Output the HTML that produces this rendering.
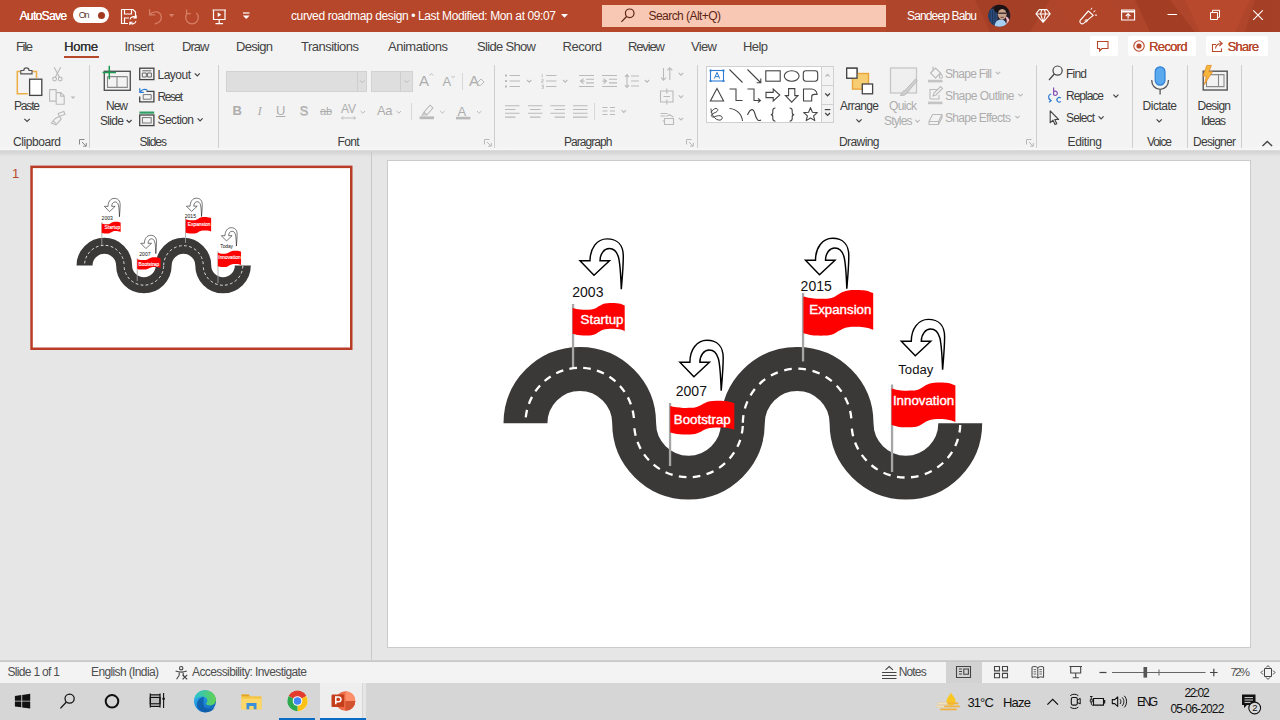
<!DOCTYPE html>
<html><head><meta charset="utf-8"><title>curved roadmap design - PowerPoint</title>
<style>
html,body{margin:0;padding:0;}
body{width:1280px;height:720px;overflow:hidden;position:relative;background:#e6e6e6;font-family:"Liberation Sans",sans-serif;}
.t{position:absolute;white-space:nowrap;line-height:1;}
.b{position:absolute;}
svg{position:absolute;left:0;top:0;overflow:visible;}
</style></head><body>

<div class="b" style="left:0;top:0;width:1280px;height:32px;background:#b7472a"></div>
<svg width="1280" height="32" viewBox="0 0 1280 32"><!-- title bar subtle pattern -->
<rect x="886" y="0" width="394" height="32" fill="#a9432a" opacity=".55"/>
<g opacity="0.6">
<path d="M975,0 L1050,0 L1030,32 L990,32 Z" fill="#9e3d24"/>
<path d="M1135,0 L1170,0 L1195,32 L1150,32 Z" fill="#9c3b23"/>
<path d="M1185,0 L1250,0 L1235,32 L1200,32 Z" fill="#c04d2e"/>
<path d="M1255,0 L1280,0 L1280,32 L1245,32 Z" fill="#a03d24"/>
<path d="M1060,0 L1110,0 L1125,32 L1075,32 Z" fill="#b14529"/>
</g>
</svg>
<div class="b" style="left:0;top:32px;width:1280px;height:118px;background:#f3f3f3"></div>
<div class="b" style="left:0;top:145px;width:1280px;height:5px;background:linear-gradient(#f3f3f3,#f7f7f7)"></div>
<div class="b" style="left:0;top:149.5px;width:1280px;height:7px;background:linear-gradient(#dedede 0%,#d3d3d3 25%,#dcdcdc 55%,#e6e6e6 100%)"></div>
<div class="b" style="left:371px;top:152px;width:1px;height:508px;background:#c9c9c9"></div>
<div class="b" style="left:0;top:660px;width:1280px;height:2px;background:linear-gradient(#d2d2d2,#c4c4c4)"></div>
<div class="b" style="left:31px;top:166px;width:321px;height:184px;background:#fff"></div>
<svg width="1280" height="720" viewBox="0 0 1280 720"><rect x="31.55" y="166.85" width="319.7" height="181.9" fill="#fff" stroke="#b83c26" stroke-width="2.5"/></svg>
<div class="b" style="left:388px;top:161px;width:862px;height:486px;background:#fff;box-shadow:0 0 0 1px #cbcbcb"></div>
<div class="b" style="left:0;top:662px;width:1280px;height:21px;background:#f3f3f3"></div>
<div class="b" style="left:946px;top:662px;width:36px;height:21px;background:#d2d2d2"></div>
<div class="b" style="left:0;top:683px;width:1280px;height:37px;background:#d6d6d6"></div>
<div class="b" style="left:320px;top:683px;width:41.5px;height:37px;background:#eeeeee"></div>
<div class="b" style="left:363px;top:683px;width:3px;height:37px;background:#e6e6e6"></div>
<div class="b" style="left:320px;top:718px;width:46px;height:2px;background:#0a6cc4"></div>
<div class="b" style="left:278.500px;top:718px;width:36.500px;height:2px;background:#0a6cc4"></div>
<div class="b" style="left:601.5px;top:4.5px;width:284.5px;height:22.5px;background:#f9c8b4"></div>
<div class="b" style="left:73px;top:7px;width:36px;height:16px;border-radius:8px;background:#fff"></div>
<div class="b" style="left:97.5px;top:11.5px;width:7px;height:7px;border-radius:3.5px;background:#a3391f"></div>
<span class="t" style="left:19.50px;top:9.84px;font-size:12px;color:#fff;letter-spacing:-0.648px;text-shadow:0.25px 0 0 #fff;">AutoSave</span>
<span class="t" style="left:78.80px;top:10.98px;font-size:9px;color:#5a3a30;letter-spacing:-1.406px;">On</span>
<span class="t" style="left:291.00px;top:9.84px;font-size:12px;color:#fff;letter-spacing:-0.387px;">curved roadmap design • Last Modified: Mon at 09:07</span>
<span class="t" style="left:648.50px;top:9.84px;font-size:12px;color:#5c2415;letter-spacing:-0.553px;">Search (Alt+Q)</span>
<span class="t" style="left:907.00px;top:9.84px;font-size:12px;color:#fff;letter-spacing:-0.855px;">Sandeep Babu</span>
<span class="t" style="left:16.00px;top:40.00px;font-size:13px;color:#444;letter-spacing:-1.316px;">File</span>
<span class="t" style="left:124.50px;top:40.00px;font-size:13px;color:#444;letter-spacing:-0.603px;">Insert</span>
<span class="t" style="left:182.00px;top:40.00px;font-size:13px;color:#444;letter-spacing:-0.945px;">Draw</span>
<span class="t" style="left:236.00px;top:40.00px;font-size:13px;color:#444;letter-spacing:-0.693px;">Design</span>
<span class="t" style="left:301.00px;top:40.00px;font-size:13px;color:#444;letter-spacing:-0.510px;">Transitions</span>
<span class="t" style="left:388.00px;top:40.00px;font-size:13px;color:#444;letter-spacing:-0.479px;">Animations</span>
<span class="t" style="left:477.00px;top:40.00px;font-size:13px;color:#444;letter-spacing:-0.671px;">Slide Show</span>
<span class="t" style="left:562.50px;top:40.00px;font-size:13px;color:#444;letter-spacing:-0.482px;">Record</span>
<span class="t" style="left:628.00px;top:40.00px;font-size:13px;color:#444;letter-spacing:-1.125px;">Review</span>
<span class="t" style="left:691.00px;top:40.00px;font-size:13px;color:#444;letter-spacing:-0.648px;">View</span>
<span class="t" style="left:743.00px;top:40.00px;font-size:13px;color:#444;letter-spacing:-0.579px;">Help</span>
<span class="t" style="left:64.00px;top:40.00px;font-size:13px;color:#333;letter-spacing:-0.226px;text-shadow:0.2px 0 0 #333;">Home</span>
<div class="b" style="left:64px;top:55.5px;width:35px;height:2.5px;background:#b7472a"></div>
<div class="b" style="left:1089.5px;top:36px;width:28.5px;height:20px;background:#fff;border-radius:2px"></div>
<div class="b" style="left:1127.5px;top:36px;width:68.5px;height:20px;background:#fff;border-radius:2px"></div>
<div class="b" style="left:1206px;top:36px;width:61.5px;height:20px;background:#fff;border-radius:2px"></div>
<span class="t" style="left:1149.00px;top:40.00px;font-size:13px;color:#b7472a;letter-spacing:-0.682px;text-shadow:0.15px 0 0 #b7472a;">Record</span>
<span class="t" style="left:1227.50px;top:40.00px;font-size:13px;color:#b7472a;letter-spacing:-0.798px;text-shadow:0.15px 0 0 #b7472a;">Share</span>
<span class="t" style="left:14.00px;top:99.84px;font-size:12px;color:#3c3c3c;letter-spacing:-1.171px;">Paste</span>
<span class="t" style="left:13.00px;top:136.44px;font-size:12px;color:#3c3c3c;letter-spacing:-0.420px;">Clipboard</span>
<span class="t" style="left:106.00px;top:99.84px;font-size:12px;color:#3c3c3c;letter-spacing:-1.003px;">New</span>
<span class="t" style="left:100.00px;top:114.84px;font-size:12px;color:#3c3c3c;letter-spacing:-0.671px;">Slide</span>
<span class="t" style="left:157.50px;top:69.14px;font-size:12px;color:#3c3c3c;letter-spacing:-0.506px;">Layout</span>
<span class="t" style="left:157.50px;top:91.14px;font-size:12px;color:#3c3c3c;letter-spacing:-1.462px;">Reset</span>
<span class="t" style="left:157.50px;top:114.14px;font-size:12px;color:#3c3c3c;letter-spacing:-0.588px;">Section</span>
<span class="t" style="left:139.50px;top:136.44px;font-size:12px;color:#3c3c3c;letter-spacing:-1.037px;">Slides</span>
<span class="t" style="left:337.50px;top:136.44px;font-size:12px;color:#3c3c3c;letter-spacing:-0.671px;">Font</span>
<span class="t" style="left:564.00px;top:136.44px;font-size:12px;color:#3c3c3c;letter-spacing:-0.942px;">Paragraph</span>
<span class="t" style="left:840.00px;top:99.84px;font-size:12px;color:#3c3c3c;letter-spacing:-0.615px;">Arrange</span>
<span class="t" style="left:889.00px;top:99.84px;font-size:12px;color:#adadad;letter-spacing:-0.668px;">Quick</span>
<span class="t" style="left:884.00px;top:114.84px;font-size:12px;color:#adadad;letter-spacing:-0.836px;">Styles</span>
<span class="t" style="left:945.00px;top:68.14px;font-size:12px;color:#adadad;letter-spacing:-0.707px;">Shape Fill</span>
<span class="t" style="left:945.00px;top:90.14px;font-size:12px;color:#adadad;letter-spacing:-0.546px;">Shape Outline</span>
<span class="t" style="left:945.00px;top:111.64px;font-size:12px;color:#adadad;letter-spacing:-0.708px;">Shape Effects</span>
<span class="t" style="left:839.00px;top:136.44px;font-size:12px;color:#3c3c3c;letter-spacing:-0.586px;">Drawing</span>
<span class="t" style="left:1066.00px;top:68.14px;font-size:12px;color:#3c3c3c;letter-spacing:-0.781px;">Find</span>
<span class="t" style="left:1066.00px;top:90.14px;font-size:12px;color:#3c3c3c;letter-spacing:-1.005px;">Replace</span>
<span class="t" style="left:1066.00px;top:111.64px;font-size:12px;color:#3c3c3c;letter-spacing:-0.870px;">Select</span>
<span class="t" style="left:1067.50px;top:136.44px;font-size:12px;color:#3c3c3c;letter-spacing:-0.365px;">Editing</span>
<span class="t" style="left:1142.50px;top:99.84px;font-size:12px;color:#3c3c3c;letter-spacing:-0.475px;">Dictate</span>
<span class="t" style="left:1147.00px;top:136.44px;font-size:12px;color:#3c3c3c;letter-spacing:-1.089px;">Voice</span>
<span class="t" style="left:1197.50px;top:99.84px;font-size:12px;color:#3c3c3c;letter-spacing:-0.771px;">Design</span>
<span class="t" style="left:1201.00px;top:114.84px;font-size:12px;color:#3c3c3c;letter-spacing:-1.089px;">Ideas</span>
<span class="t" style="left:1193.00px;top:136.44px;font-size:12px;color:#3c3c3c;letter-spacing:-0.718px;">Designer</span>
<span class="t" style="left:232.50px;top:104.00px;font-size:13px;color:#adadad;font-weight:bold;">B</span>
<span class="t" style="left:257.50px;top:104.00px;font-size:13px;color:#adadad;font-style:italic;font-family:'Liberation Serif',serif;">I</span>
<span class="t" style="left:276.00px;top:104.00px;font-size:13px;color:#adadad;text-decoration:underline;">U</span>
<span class="t" style="left:299.50px;top:104.00px;font-size:13px;color:#adadad;text-shadow:0.5px 0.5px 0 #c8c8c8;">S</span>
<span class="t" style="left:320.00px;top:105.69px;font-size:11px;color:#adadad;letter-spacing:-0.235px;text-decoration:line-through;">ab</span>
<span class="t" style="left:341.00px;top:102.84px;font-size:12px;color:#adadad;letter-spacing:-0.117px;">AV</span>
<span class="t" style="left:377.00px;top:104.00px;font-size:13px;color:#adadad;letter-spacing:-0.401px;">Aa</span>
<span class="t" style="left:419.00px;top:73.30px;font-size:15px;color:#adadad;">A</span>
<span class="t" style="left:442.50px;top:75.00px;font-size:13px;color:#adadad;">A</span>
<span class="t" style="left:469.00px;top:73.30px;font-size:15px;color:#adadad;">A</span>
<span class="t" style="left:457.50px;top:105.00px;font-size:13px;color:#adadad;">A</span>
<div class="b" style="left:226px;top:71px;width:141px;height:21px;background:#dedede;border:1px solid #d2d2d2;box-sizing:border-box"></div>
<div class="b" style="left:357px;top:72px;width:1px;height:19px;background:#cdcdcd"></div>
<div class="b" style="left:371px;top:71px;width:42px;height:21px;background:#dedede;border:1px solid #d2d2d2;box-sizing:border-box"></div>
<div class="b" style="left:400px;top:72px;width:1px;height:19px;background:#cdcdcd"></div>
<div class="b" style="left:706px;top:66px;width:128px;height:57px;background:#fff;border:1px solid #d0d0d0;box-sizing:border-box"></div>
<div class="b" style="left:821px;top:66px;width:13px;height:57px;background:#f3f3f3;border:1px solid #d0d0d0;box-sizing:border-box"></div>
<div class="b" style="left:821px;top:85px;width:13px;height:1px;background:#d0d0d0"></div>
<div class="b" style="left:821px;top:104px;width:13px;height:1px;background:#d0d0d0"></div>
<div class="b" style="left:89.0px;top:64.5px;height:83px;width:1px;background:#cecece"></div>
<div class="b" style="left:217.5px;top:64.5px;height:83px;width:1px;background:#cecece"></div>
<div class="b" style="left:493.5px;top:64.5px;height:83px;width:1px;background:#cecece"></div>
<div class="b" style="left:696.5px;top:64.5px;height:83px;width:1px;background:#cecece"></div>
<div class="b" style="left:1035.5px;top:64.5px;height:83px;width:1px;background:#cecece"></div>
<div class="b" style="left:1132.0px;top:64.5px;height:83px;width:1px;background:#cecece"></div>
<div class="b" style="left:1186.5px;top:64.5px;height:83px;width:1px;background:#cecece"></div>
<div class="b" style="left:1240.5px;top:64.5px;height:83px;width:1px;background:#cecece"></div>
<div class="b" style="left:461.5px;top:72.5px;height:17.5px;width:1px;background:#d8d8d8"></div>
<div class="b" style="left:410.5px;top:103px;height:17px;width:1px;background:#d8d8d8"></div>
<div class="b" style="left:594.0px;top:103px;height:17px;width:1px;background:#d8d8d8"></div>
<span class="t" style="left:12.00px;top:167.00px;font-size:13px;color:#b7472a;">1</span>
<span class="t" style="left:7.50px;top:665.84px;font-size:12px;color:#4f4f4f;letter-spacing:-0.686px;">Slide 1 of 1</span>
<span class="t" style="left:91.00px;top:665.84px;font-size:12px;color:#4f4f4f;letter-spacing:-0.622px;">English (India)</span>
<span class="t" style="left:192.00px;top:665.84px;font-size:12px;color:#4f4f4f;letter-spacing:-0.602px;">Accessibility: Investigate</span>
<span class="t" style="left:898.70px;top:666.34px;font-size:12px;color:#4f4f4f;letter-spacing:-0.837px;">Notes</span>
<span class="t" style="left:1230.40px;top:666.77px;font-size:11.5px;color:#555;letter-spacing:-1.708px;">72%</span>
<span class="t" style="left:967.40px;top:695.60px;font-size:13px;color:#111;letter-spacing:-0.882px;">31°C</span>
<span class="t" style="left:1003.00px;top:695.60px;font-size:13px;color:#111;letter-spacing:-0.783px;">Haze</span>
<span class="t" style="left:1137.00px;top:695.54px;font-size:12px;color:#111;letter-spacing:-2.502px;">ENG</span>
<span class="t" style="left:1184.40px;top:687.14px;font-size:12px;color:#111;letter-spacing:-1.207px;">22:02</span>
<span class="t" style="left:1170.40px;top:703.14px;font-size:12px;color:#111;letter-spacing:-0.820px;">05-06-2022</span>
<svg width="1280" height="720" viewBox="0 0 1280 720" fill="none" stroke-linecap="butt">
<g stroke="#fff" stroke-width="1.2">
<!-- save w/ sync -->
<path d="M121.5,9.5 h11.5 l2.5,2.5 v5 M121.5,9.5 v14 h6.5"/>
<path d="M124.5,9.5 v4.5 h7 v-4.5 M124.5,23.5 v-5.5 h4.5"/>
<path d="M130,19.5 a3.6,3.6 0 0 1 6,-1.8 M136.2,15.2 v2.8 h-2.8 M136,21 a3.6,3.6 0 0 1 -6,1.8 M129.8,25 v-2.8 h2.8" stroke-width="1.1"/>
<!-- present -->
<path d="M212.5,10 h13.5 M213.5,10 v9.5 h11.5 v-9.5 M219.2,19.5 v4 M215.5,23.7 h7.5"/>
<path d="M217.7,12.3 l3.6,2.4 l-3.6,2.4 z" fill="#fff" stroke="none"/>
<!-- customize -->
<path d="M243,13 h6.5"/>
<path d="M242.8,15.6 h6.9 l-3.45,3.4 z" fill="#fff" stroke="none"/>
<!-- title caret -->
<path d="M561,14 h7 l-3.5,3.8 z" fill="#fff" stroke="none"/>
<!-- diamond -->
<path d="M1039.3,9.6 h7.6 l3.3,4.3 l-7.1,8.4 l-7.1,-8.4 z M1036.2,13.9 h13.8 M1040.6,13.9 l2.5,8 l2.5,-8 M1040.6,13.9 l1.2,-4.2 M1045.6,13.9 l-1.2,-4.2" stroke-width="1.05" stroke-linejoin="round"/>
<!-- coming soon / megaphone -->
<path d="M1080.2,20.400 L1088.400,11 L1093.200,15.400 L1083.600,23.400 C1081.600,24.800 1078.800,22.400 1080.200,20.400 Z" stroke-width="1.150" stroke-linejoin="round"/>
<circle cx="1086.300" cy="20.700" r="1.100" stroke-width=".9"/>
<path d="M1090.800,9.800 l1.300,-2 M1093.400,12 l2,-1.300 M1094.800,15 l2.200,0.200" stroke-width="1"/>
<!-- ribbon display -->
<path d="M1121.600,10 h13 v10 h-13 z" stroke-width="1.100"/>
<path d="M1121.600,11.600 h13" stroke-width="1.800"/>
<path d="M1128.100,18.400 v-4.400 M1125.800,16 l2.300,-2.300 l2.300,2.300" stroke-width="1.100"/>
<!-- min / restore / close -->
<path d="M1167.5,14.5 h9.6" stroke-width="1"/>
<path d="M1210.5,12.5 h7 v7 h-7 z M1212.5,12.3 v-2 h7 v7 h-1.8" stroke-width="1"/>
<path d="M1253.2,10.3 l9.6,9.6 M1262.8,10.3 l-9.6,9.6" stroke-width="1.1"/>
</g>
<!-- faded undo/redo -->
<g stroke="#d47e65" stroke-width="1.300">
<path d="M149.600,9.200 v5.600 h5.600 M150,14.400 c3,-3.600 9.200,-3.600 11,1 c1.600,4 -1.400,7.600 -6.200,8.600"/>
<path d="M168.800,14 h5.600 l-2.800,3.200 z" fill="#d47e65" stroke="none"/>
<path d="M187.600,13 a6.300,6.300 0 1 0 8.800,0 M186.600,9.400 v4.200 h4.200"/>
</g>
<!-- search icon -->
<g stroke="#5c2415" stroke-width="1.2">
<circle cx="629.7" cy="13.3" r="4.3"/><path d="M626.6,16.5 l-5.2,5.4"/>
</g>
<!-- avatar -->
<defs><clipPath id="av"><circle cx="999.300" cy="15.800" r="11"/></clipPath></defs>
<g clip-path="url(#av)">
<rect x="988" y="4" width="23" height="24" fill="#2b2029"/>
<path d="M988,9 h9.500 v16 h-9.500 z" fill="#2c4a78"/>
<path d="M990,11 v13 M992.500,10 v14 M995,10 v14" stroke="#1f3558" stroke-width="1"/>
<ellipse cx="1001.500" cy="9" rx="7.500" ry="5" fill="#1a1214"/>
<ellipse cx="1002.200" cy="14.200" rx="4.300" ry="5.200" fill="#c9a48c"/>
<path d="M998.200,12.400 h8 v1.700 h-8 z" fill="#4a3430"/>
<path d="M1000.500,16.800 h3.400 v1.200 h-3.400 z" fill="#8a5a4c"/>
<path d="M994.500,28 c0,-6.500 3,-8.600 6.500,-8.600 c3.500,0 5.500,2.100 5.500,8.600z" fill="#a9cff0"/>
<path d="M1006.600,16.500 c3.600,2 4,7 1.400,10.500 l-2.600,-1.400 c1.800,-3 1.800,-5.600 0.200,-8z" fill="#f3b9c2"/>
</g>
<!-- tab row right buttons icons -->
<g stroke="#b7472a" stroke-width="1.1">
<path d="M1097.5,41.5 h10.5 v7 h-6 l-2.4,2.4 v-2.4 h-2.1 z"/>
<circle cx="1139" cy="46" r="5.2"/><circle cx="1139" cy="46" r="2.6" fill="#b7472a" stroke="none"/>
<path d="M1216,44.5 h-3.5 v7 h9 v-3 M1215.5,48.5 c0.5,-3.5 3,-5 6,-5 M1219.3,40.8 l2.9,2.7 l-2.9,2.7"/>
</g>
</svg>
<svg width="1280" height="720" viewBox="0 0 1280 720" fill="none">
<!-- ===== Clipboard group ===== -->
<!-- paste -->
<path d="M20.600,71.500 h-3.300 v22.300 h10.500 M32.400,71.500 h4.100 v6.500" stroke="#ecae45" stroke-width="1.500"/>
<path d="M20.800,73.800 v-3.300 h3 c0,-3.600 5.200,-3.600 5.200,0 h3 v3.300 z" stroke="#555" stroke-width="1.2" fill="#f3f3f3"/>
<rect x="29.6" y="79.2" width="12.2" height="16.2" fill="#fff" stroke="#444" stroke-width="1.3"/>
<path d="M24.4,118.8 l2.7,2.7 l2.7,-2.7" stroke="#444" stroke-width="1.2"/>
<!-- cut (disabled) -->
<g stroke="#bababa" stroke-width="1.1">
<path d="M54.2,67.3 l5.2,10 M60.6,67.3 l-5.2,10"/>
<circle cx="54.6" cy="79" r="1.9"/><circle cx="60.2" cy="79" r="1.9"/>
<!-- copy -->
<path d="M49.6,89.6 h6.5 v11.5 h-6.5 z M56.2,92.6 h4.6 l3.4,3.4 v8.2 h-8 z M60.6,92.8 v3.4 h3.4"/>
<path d="M70.6,96.4 h4.8 l-2.4,2.6 z" fill="#bababa" stroke="none"/>
<!-- format painter -->
<path d="M58.2,113.6 l5.6,-2.2 l1.2,2.8 l-5.6,2.4 z M59.4,116.4 l-4,2 l-4,4.6 l4.6,1.8 l5.2,-5.6 z M53,120.8 l3,2.6"/>
</g>
<!-- dialog launchers -->
<g stroke="#8a8a8a" stroke-width="1">
<path d="M79.5,144.5 v-5 h5 M82,142 l4,4 M86.3,143 v3.2 h-3.2"/>
<path d="M484.5,144.5 v-5 h5 M487,142 l4,4 M491.3,143 v3.2 h-3.2" stroke="#b8b8b8"/>
<path d="M686.5,144.5 v-5 h5 M689,142 l4,4 M693.3,143 v3.2 h-3.2" stroke="#b8b8b8"/>
<path d="M1026.5,144.5 v-5 h5 M1029,142 l4,4 M1033.3,143 v3.2 h-3.2" stroke="#b8b8b8"/>
</g>
<!-- ===== Slides group ===== -->
<rect x="104.3" y="71.3" width="26" height="19" stroke="#555" stroke-width="1.4"/>
<path d="M107.5,76.6 h19.8 M117,76.6 v10.8 M107.5,76.6 v10.8 h19.8 v-10.8" stroke="#8a8a8a" stroke-width="1.1"/>
<path d="M109.3,65.8 v13.4 M102.6,72.5 h13.4" stroke="#1f9a55" stroke-width="1.5"/>
<path d="M126.6,120 l2.5,2.5 l2.5,-2.5" stroke="#444" stroke-width="1.2"/>
<!-- layout -->
<rect x="139.7" y="68.2" width="14.2" height="11.4" stroke="#444" stroke-width="1.3"/>
<path d="M142.3,70.8 h9 M142.3,73 h4 v4 h-4 z M147.6,73 h3.8 v4 h-3.8 z" stroke="#666" stroke-width="1"/>
<path d="M194.8,73.4 l2.5,2.5 l2.5,-2.5" stroke="#444" stroke-width="1.2"/>
<!-- reset -->
<path d="M146.5,91.3 h7.4 v10.6 h-14.2 v-5.4" stroke="#444" stroke-width="1.3"/>
<path d="M143.2,94.6 h8 v4.6 h-8 z" stroke="#777" stroke-width="1"/>
<path d="M139.8,88.3 v4 h4 M140.2,92 c1.4,-2.6 5,-3.6 7.4,-1.6" stroke="#2b7cd3" stroke-width="1.2"/>
<!-- section -->
<path d="M139.4,112.6 h14.8" stroke="#2f9e63" stroke-width="2.2"/>
<rect x="139.7" y="115" width="14.2" height="10.6" stroke="#444" stroke-width="1.3"/>
<rect x="142.4" y="117.6" width="8.8" height="5.4" stroke="#777" stroke-width="1"/>
<path d="M197.6,118.4 l2.5,2.5 l2.5,-2.5" stroke="#444" stroke-width="1.2"/>

<!-- ===== Font group (disabled) ===== -->
<g stroke="#bababa" stroke-width="1" fill="none">
<path d="M360,80.4 l2.2,2.2 l2.2,-2.2 M404.5,80.4 l2.2,2.2 l2.2,-2.2"/>
<path d="M429.6,75.4 l1.8,-1.8 l1.8,1.8"/>
<path d="M451.4,76 l1.7,1.7 l1.7,-1.7"/>
<path d="M477.6,82.4 l3.4,-3.4 l3,3 l-3.4,3.4 h-3 z" />
<path d="M341.5,118 h14 M341.5,118 l1.8,-1.5 M341.5,118 l1.8,1.5 M355.5,118 l-1.8,-1.5 M355.5,118 l-1.8,1.5" stroke-width=".9"/>
<path d="M360.6,111 l2.2,2.2 l2.2,-2.2 M396.6,111 l2.2,2.2 l2.2,-2.2 M440.2,111 l2.2,2.2 l2.2,-2.2 M477,111 l2.2,2.2 l2.2,-2.2"/>
<!-- highlighter -->
<path d="M424,112.2 l6,-7 l3,2.6 l-6,7 z M424,112.2 l-1.8,3 l4.8,-0.4" stroke-width="1.1"/>
</g>
<rect x="419.6" y="116.4" width="14.4" height="2.8" fill="#b9b9b9"/>
<rect x="456" y="116.8" width="14.4" height="2.6" fill="#b9b9b9"/>

<!-- ===== Paragraph group (disabled) ===== -->
<g stroke="#bababa" stroke-width="1.1" fill="none">
<!-- bullets -->
<path d="M509.5,75.5 h10.5 M509.5,81 h10.5 M509.5,86.5 h10.5"/>
<path d="M505,74.6 h2 v2 h-2z M505,80 h2 v2 h-2z M505,85.5 h2 v2 h-2z" fill="#bababa" stroke="none"/>
<path d="M527,80 l2.2,2.2 l2.2,-2.2 M563,80 l2.2,2.2 l2.2,-2.2"/>
<!-- numbering -->
<path d="M546,75.5 h10.5 M546,81 h10.5 M546,86.5 h10.5"/>
<path d="M542.2,73.8 v3.6 M541.6,79.4 h1.6 v1.6 h-1.6 v1.6 h1.8 M541.6,85 h1.8 v3.4 h-1.8 M541.8,86.7 h1.4" stroke-width=".8"/>
<!-- dec indent -->
<path d="M579,75.5 h15 M586,79.2 h8 M586,82.9 h8 M579,86.5 h15 M583.5,78.6 l-3,2.5 l3,2.5 M580.5,81.1 h4" />
<!-- inc indent -->
<path d="M602,75.5 h15 M609,79.2 h8 M609,82.9 h8 M602,86.5 h15 M603.5,78.6 l3,2.5 l-3,2.5 M606.5,81.1 h-4"/>
<!-- line spacing -->
<path d="M631,76 h8 M631,81 h8 M631,86 h8 M627,74.6 v12.8 M625,76.8 l2,-2.2 l2,2.2 M625,85.2 l2,2.2 l2,-2.2"/>
<path d="M644.8,80 l2.2,2.2 l2.2,-2.2"/>
<!-- align -->
<path d="M505,105.7 h14.5 M505,109.5 h10.5 M505,113.3 h14.5 M505,117.1 h10.5"/>
<path d="M528,105.7 h14.5 M530,109.5 h10.5 M528,113.3 h14.5 M530,117.1 h10.5"/>
<path d="M550.5,105.7 h14.5 M554.5,109.5 h10.5 M550.5,113.3 h14.5 M554.5,117.1 h10.5"/>
<path d="M573,105.7 h14.5 M573,109.5 h14.5 M573,113.3 h14.5 M573,117.1 h14.5"/>
<!-- columns -->
<path d="M602.5,107.5 h5 M602.5,111 h5 M602.5,114.5 h5 M610,107.5 h5 M610,111 h5 M610,114.5 h5"/>
<path d="M621.6,110.2 l2.2,2.2 l2.2,-2.2"/>
<!-- text direction -->
<path d="M663.5,68 v12 M661,77.6 l2.5,2.6 l2.5,-2.6 M669.8,80 v-12 M667.3,70.4 l2.5,-2.6 l2.5,2.6" />
<path d="M678.8,73 l2.2,2.2 l2.2,-2.2 M678.8,95.4 l2.2,2.2 l2.2,-2.2 M678.8,117.8 l2.2,2.2 l2.2,-2.2"/>
<!-- align text -->
<path d="M660.5,91 h12.5 v11 h-12.5 z M663.5,96.5 h6.5 M666.8,88.6 v5 M666.8,99.4 v5" />
<!-- smartart -->
<path d="M660.5,113.5 h7 M660.5,116 h5 M664.5,118.5 h9 v6 h-9 z M662.5,121 h2 M666.5,116.3 l3,-1.6 l4,2.4 "/>
</g>
</svg>
<svg width="1280" height="720" viewBox="0 0 1280 720" fill="none">
<!-- ===== Shapes gallery ===== -->
<g stroke="#444" stroke-width="1.1">
<!-- row 1 -->
<rect x="710.5" y="70.5" width="13" height="10.5" stroke="#2b7cd3"/>
<path d="M714.3,78.6 l2.7,-6.2 l2.7,6.2 M715.2,76.6 h3.6" stroke="#2b7cd3" stroke-width="1"/>
<path d="M709.6,69.6 h1.8 v1.8 h-1.8z M722.6,69.6 h1.8 v1.8 h-1.8z M709.6,80.1 h1.8 v1.8 h-1.8z M722.6,80.1 h1.8 v1.8 h-1.8z" fill="#2b7cd3" stroke="none"/>
<path d="M729.5,69.5 l13,13"/>
<path d="M747.5,69.5 l13,13 M760.8,78.6 v4.2 h-4.2"/>
<rect x="765.8" y="70.8" width="14.4" height="10.4"/>
<ellipse cx="791.7" cy="76" rx="7.4" ry="5.2"/>
<rect x="803.3" y="70.8" width="14.4" height="10.4" rx="2.6"/>
<!-- row 2 -->
<path d="M717,88.4 l6.6,12.6 h-13.2 z"/>
<path d="M729.5,89 h6.5 v11.5 h6.5"/>
<path d="M747.5,89 h6.5 v11.5 h6 M758,98.4 l2.4,2.1 l-2.4,2.1" />
<path d="M766,92.4 h7.2 v-3.4 l6.6,6 l-6.6,6 v-3.4 h-7.2 z"/>
<path d="M788.6,88.6 h6.2 v7 h3.2 l-6.3,6.6 l-6.3,-6.6 h3.2 z"/>
<path d="M803.5,101 v-12 h8 c3,0 5.6,2.4 5.6,5.4 h-2.8 c-1.6,0 -2.6,1.2 -2.6,2.6 v4 z" stroke-linejoin="round"/>
<!-- row 3 -->
<path d="M711,108.5 c0,6 4,12 9,11.6 c3,-0.4 3,-4 0,-4.4 c-4,-0.4 -7,2.6 -8.4,0.6 c-1.4,-2.4 3.4,-3.2 5.4,-4.8 c1.4,-1.2 0.8,-3 -1,-3 c-2,0 -3.6,1.6 -5,4" stroke-width="1"/>
<path d="M729.5,108.5 c7,0.5 12.5,5.5 13,12.5"/>
<path d="M747.5,115 c3,-7 6,-7 7.5,-1 c1.5,6 3.500,7.500 6,6"/>
<path d="M775.4,108 c-2.200,0 -2.600,1 -2.600,2.600 v1.800 c0,1.400 -0.600,2.200 -2,2.200 c1.400,0 2,0.800 2,2.200 v1.800 c0,1.600 0.400,2.600 2.600,2.600"/>
<path d="M789.6,108 c2.200,0 2.600,1 2.600,2.600 v1.800 c0,1.400 0.600,2.200 2,2.200 c-1.400,0 -2,0.800 -2,2.200 v1.800 c0,1.600 -0.400,2.600 -2.600,2.600"/>
<path d="M810.5,107.600 l1.900,4.600 l4.900,0.400 l-3.700,3.200 l1.200,4.800 l-4.300,-2.600 l-4.300,2.600 l1.200,-4.800 l-3.700,-3.200 l4.900,-0.400 z" stroke-linejoin="round"/>
<!-- gallery scroll -->
<path d="M825.4,76.600 l2.200,-2.200 l2.200,2.200" stroke="#bdbdbd"/>
<path d="M825.2,93.400 l2.400,2.400 l2.400,-2.400" stroke-width="1.3"/>
<path d="M824.800,109.600 h5.600" stroke-width="1.2"/><path d="M825.200,113 l2.400,2.400 l2.400,-2.400" stroke-width="1.3"/>
</g>
<!-- arrange -->
<rect x="846.7" y="68.200" width="10.300" height="10" fill="#fff" stroke="#444" stroke-width="1.3"/>
<rect x="852.500" y="73.500" width="16" height="15.600" fill="#f7cd74" stroke="#e9a63a" stroke-width="1.400"/>
<rect x="846.7" y="68.200" width="10.300" height="10" fill="#fff" stroke="#444" stroke-width="1.3"/>
<rect x="862.300" y="84" width="10.300" height="9.800" fill="#fff" stroke="#444" stroke-width="1.3"/>
<path d="M856.400,119.400 l2.600,2.600 l2.600,-2.600" stroke="#444" stroke-width="1.2"/>
<!-- quick styles (disabled) -->
<rect x="890.500" y="68" width="26" height="25" stroke="#c6c6c6" stroke-width="1.300" fill="#efefef"/>
<path d="M915.500,79 l1.800,1.600 l-9.600,11.600 l-2.400,-2 z M905,90.600 c-2,0.200 -3,1.400 -3.200,3.400 l-1.600,1.200 c3,0.600 5.800,0 6.800,-2.600" fill="#cfcfcf" stroke="#bababa" stroke-width="1"/>
<path d="M915.200,119.800 l2.300,2.300 l2.300,-2.300" stroke="#bababa" stroke-width="1.100"/>
<!-- shape fill/outline/effects (disabled) -->
<g stroke="#bababa" stroke-width="1.100">
<path d="M930.500,73 l5,-5 l5,5 l-5,5 z M933,66.500 v4 M940.800,73.400 c0.800,1.400 1.600,2.400 1.600,3.400 a1.500,1.500 0 0 1 -3,0 c0,-1 0.700,-2 1.400,-3.400z"/>
<rect x="928" y="79.800" width="14.500" height="2.600" fill="#c4c4c4" stroke="none"/>
<path d="M930,99 v-9.500 h8.500 M930,99 h9 v-4 M933,96 l1,-3 l6.500,-6.500 l2,2 l-6.500,6.500 z"/>
<rect x="928" y="101.600" width="14.500" height="2.600" fill="#c4c4c4" stroke="none"/>
<path d="M929,121.500 l3.500,-7 h9.500 l-3.500,7 z M929,121.500 v3 h9.500 v-3 M938.500,124.500 l3.500,-7 v-3" stroke-linejoin="round"/>
<path d="M995.800,71.800 l2.200,2.200 l2.200,-2.200 M1018.300,93.800 l2.200,2.200 l2.200,-2.200 M1015.300,115.800 l2.200,2.200 l2.200,-2.200"/>
</g>
<!-- ===== Editing ===== -->
<g stroke="#444" stroke-width="1.200">
<circle cx="1057.600" cy="70.600" r="4.600"/><path d="M1054.300,74 l-5.300,6"/>
<path d="M1050.200,110.800 v12 l2.800,-2.600 l2,4.400 l1.800,-0.800 l-2,-4.300 h3.800 z" stroke-linejoin="round" stroke-width="1.100"/>
<path d="M1113.400,94.600 l2.500,2.500 l2.500,-2.500 M1098.600,116.400 l2.500,2.500 l2.500,-2.500"/>
</g>
<!-- replace -->
<g stroke-width="1.200">
<path d="M1053.600,87.600 v7.400 M1053.600,92 a2.100,2.100 0 1 1 0,2.600" stroke="#8653b5"/>
<path d="M1060.800,98 a2.300,2.300 0 1 0 0,3.400" stroke="#2b7cd3"/>
<path d="M1051.200,94 c-3.400,0.600 -3.400,5.600 0,6.400 M1049.200,98.600 l2,2 l-2.200,1.600" stroke="#2b7cd3" stroke-width="1.100"/>
</g>
<!-- ===== Dictate ===== -->
<rect x="1155.200" y="66.800" width="9.800" height="18.400" rx="4.900" fill="#5aa9ee" stroke="#2f80d3" stroke-width="1.200"/>
<path d="M1151.700,80 c0,5.600 3.600,9.400 8.400,9.400 c4.800,0 8.400,-3.800 8.400,-9.400 M1160.100,89.400 v5.200" stroke="#555" stroke-width="1.300"/>
<path d="M1156.600,119.400 l2.600,2.600 l2.600,-2.600" stroke="#444" stroke-width="1.200"/>
<!-- ===== Designer ===== -->
<rect x="1203.200" y="71.200" width="24" height="18.800" stroke="#555" stroke-width="1.400"/>
<path d="M1206.500,74.600 h17.500 v12 h-17.500 z M1218.500,74.600 v12" stroke="#8a8a8a" stroke-width="1.100"/>
<path d="M1206.800,65.400 h4.600 l-2.600,6.400 h3.600 l-8,12.800 l2,-8.600 h-3.200 z" fill="#f5b73c" stroke="#e8912c" stroke-width=".9" stroke-linejoin="round"/>
<!-- collapse chevron -->
<path d="M1262.500,146 l4.800,-4.600 l4.800,4.600" stroke="#444" stroke-width="1.400"/>
</svg>
<svg width="1280" height="720" viewBox="0 0 1280 720" fill="none">
<!-- ===== status bar ===== -->
<g stroke="#444" stroke-width="1.1">
<!-- accessibility -->
<circle cx="181.200" cy="668.200" r="1.700"/>
<path d="M175.600,671 c3.600,1.400 7.600,1.400 11.200,0 M179.200,672 v3.200 l-2.600,4 M183.200,672 v3.200 l0.800,1.200"/>
<path d="M182.600,674.800 l4.600,4.600 M187.200,674.800 l-4.600,4.600" stroke-width="1.200"/>
<!-- notes -->
<path d="M882,675.500 h14.500 M882,678.500 h14.500 M882,672.500 h14.500 M885.500,669.800 l3.700,-3.200 l3.700,3.200" stroke-width="1.100"/>
<!-- normal view -->
<path d="M956.500,666.500 h14 v11 h-14 z M959,669 h3 M959,671.500 h3 M959,674 h3 M963.800,669 h4.600 v5.200 h-4.600 z" stroke-width="1.100"/>
<!-- sorter -->
<path d="M994.500,666.500 h5 v4.400 h-5 z M1002.500,666.500 h5 v4.400 h-5 z M994.500,673.400 h5 v4.400 h-5 z M1002.500,673.400 h5 v4.400 h-5 z"/>
<!-- reading -->
<path d="M1032,667 c2.400,-0.800 4,-0.600 5.800,0.600 c1.800,-1.200 3.400,-1.400 5.800,-0.600 v10.400 c-2.400,-0.800 -4,-0.600 -5.800,0.600 c-1.800,-1.200 -3.400,-1.400 -5.800,-0.600 z M1037.800,667.600 v10.400" stroke-width="1"/>
<path d="M1033.600,669.600 h2.600 M1033.600,671.800 h2.600 M1033.600,674 h2.600 M1039.400,669.600 h2.600 M1039.400,671.800 h2.600 M1039.400,674 h2.600" stroke-width=".8"/>
<!-- slideshow -->
<path d="M1069.500,666.500 h12.500 M1070.700,666.500 v6.500 h10 v-6.500 M1075.700,673 v4.600 M1072.700,677.800 h6"/>
<!-- zoom -->
<path d="M1099.500,672.500 h7" stroke-width="1.200"/>
<path d="M1112,672.500 h93.500" stroke="#666" stroke-width="1"/>
<path d="M1159,669.500 v6" stroke="#666" stroke-width="1"/>
<rect x="1143.500" y="667" width="3.600" height="10.600" fill="#555" stroke="none"/>
<path d="M1210,672.500 h7.600 M1213.800,668.700 v7.600" stroke-width="1.200"/>
<!-- fit -->
<path d="M1264.500,668.500 h7 v8 h-7 z M1268,665.600 l-2,2 M1268,665.600 l2,2 M1268,679.400 l-2,-2 M1268,679.400 l2,-2 M1261,672.500 l2,-2 M1261,672.500 l2,2 M1275,672.500 l-2,-2 M1275,672.500 l-2,2" stroke-width="1"/>
</g>
<!-- ===== taskbar ===== -->
<!-- windows -->
<path d="M14.900,695.900 l6.400,-0.900 v5.700 h-6.400 z M22.200,694.900 l8,-1.200 v7 h-8 z M14.900,701.600 h6.400 v5.700 l-6.400,-0.900 z M22.200,701.600 h8 v7 l-8,-1.200 z" fill="#111"/>
<!-- search -->
<circle cx="69.600" cy="698.600" r="4.600" stroke="#111" stroke-width="1.250"/><path d="M66.400,702 l-6,6.400" stroke="#111" stroke-width="1.300"/>
<!-- cortana -->
<circle cx="112" cy="701.300" r="6.300" stroke="#111" stroke-width="2"/>
<!-- task view -->
<g stroke="#111" stroke-width="1.200">
<rect x="150.300" y="697.400" width="9.700" height="6.400" fill="#bdbdbd"/>
<path d="M150.300,693.600 v13.800 M160,693.600 v13.800 M150.300,694.800 h9.700 M150.300,706.400 h9.700"/>
<path d="M163.600,693 v15" stroke-width="1.100"/>
<circle cx="163.600" cy="698.800" r="1.300" fill="#111" stroke="none"/>
</g>
<!-- edge -->
<defs>
<linearGradient id="eg1" x1="0" y1="0" x2="1" y2="1"><stop offset="0" stop-color="#35c1f1"/><stop offset=".6" stop-color="#1b7fd4"/><stop offset="1" stop-color="#0c59a4"/></linearGradient>
<linearGradient id="eg2" x1="0" y1="0" x2="1" y2="0"><stop offset="0" stop-color="#2bc3d2"/><stop offset="1" stop-color="#63d24e"/></linearGradient>
</defs>
<circle cx="205" cy="701.300" r="11" fill="url(#eg1)"/>
<path d="M194.300,699 c1,-6 6,-8.800 10.800,-8.800 c6.200,0 10.800,4.400 10.800,9.600 c0,3.600 -2.800,5.600 -5.800,5.600 c-2.600,0 -4,-1 -4,-2 c0,-0.800 1.200,-1.200 1.200,-3 c0,-2.200 -2.200,-4 -5,-4 c-3.600,0 -6.600,1.600 -8,2.600z" fill="url(#eg2)"/>
<path d="M203.600,704.200 c0,2.400 2.400,5 6.600,5 c2,0 3.600,-0.600 4.600,-1.400 c-2,3 -5.600,4.600 -9.200,4.600 c-5,0 -8.600,-3.800 -8.600,-8 c0,-4 3,-7 7,-7.400 c-0.600,1.600 -0.400,4.600 -0.400,7.200z" fill="#0d5ba8" opacity=".85"/>
<!-- explorer -->
<path d="M241.500,694.500 h7 l1.600,1.800 h11.400 v13 h-20 z" fill="#f6c445"/>
<path d="M241.500,698.500 h20 v10.800 h-20 z" fill="#fbd869"/>
<path d="M246.500,703 h10 v6.300 h-2.800 v-3.400 h-4.400 v3.400 h-2.800 z" fill="#3a8fdb"/>
<path d="M241.500,694.500 h7 l1.600,1.800 h-8.600 z" fill="#e0a526"/>
<!-- chrome -->
<circle cx="297.500" cy="701" r="10.200" fill="#fff"/>
<path d="M297.500,701 L288.700,695.900 A10.200,10.200 0 0 1 306.300,695.900 Z" fill="#e33b2e"/>
<path d="M297.500,701 L306.300,695.900 A10.200,10.200 0 0 1 297.500,711.200 Z" fill="#fbc116"/>
<path d="M297.500,701 L297.500,711.200 A10.200,10.200 0 0 1 288.700,695.900 Z" fill="#2da94f"/>
<path d="M288.700,695.900 A10.200,10.200 0 0 1 306.300,695.900 L297.500,695.900 Z" fill="#e33b2e"/>
<circle cx="297.500" cy="701" r="4.800" fill="#fff"/>
<circle cx="297.500" cy="701" r="3.800" fill="#4285f4"/>
<!-- powerpoint -->
<circle cx="345.500" cy="701" r="9.800" fill="#ed6c47"/>
<path d="M345.500,691.200 a9.800,9.800 0 0 1 9.800,9.800 h-9.800 z" fill="#ff8f6b"/>
<path d="M345.500,701 h9.800 a9.800,9.800 0 0 1 -9.800,9.800 z" fill="#d35230"/>
<rect x="331.500" y="694.500" width="12.600" height="12.600" rx="1.200" fill="#c43e1c"/>
<path d="M335.800,704.300 v-7.200 h2.600 c3.400,0 3.400,4.600 0,4.600 h-2.600" stroke="#fff" stroke-width="1.500"/>
<!-- weather -->
<path d="M951,692.400 c1.400,3 4.600,5.600 4.600,8.600 a4.600,4.600 0 0 1 -9.200,0 c0,-3 3.200,-5.600 4.600,-8.600z" fill="#f9c623"/>
<path d="M938.500,703.400 h19 M937.500,706.400 h21.500 M941,709.400 h15" stroke="#f2b13a" stroke-width="1.800" stroke-linecap="round"/>
<path d="M938.500,703.400 h8 M937.500,706.400 h6" stroke="#ece3c4" stroke-width="1.800" stroke-linecap="round"/>
<!-- tray -->
<g stroke="#111" stroke-width="1.300">
<path d="M1047.400,704.600 l5.300,-5.300 l5.300,5.300"/>
<rect x="1071.300" y="697.500" width="6" height="7.600" rx="1.600" stroke-width="1.100"/>
<path d="M1077.400,700 l2.800,-1.600 v5.600 l-2.800,-1.600 M1070.300,695.600 c2.400,-1.800 5.600,-1.800 8,0 M1070.300,707.200 c2.400,1.800 5.600,1.800 8,0" stroke-width="1"/>
<path d="M1093.500,698.500 h10 v6.600 h-10 z M1103.500,700.600 h1.200 v2.400 h-1.200" stroke-width="1.100"/>
<path d="M1090,696.500 h2.600 M1091.300,696.500 v2.600 M1090.300,699.300 h2 v2.600 h-2 z M1091.300,702 v2 c0,1 1,1.200 2,1.200" stroke-width=".9"/>
<path d="M1112.300,699.600 h2.400 l3,-2.800 v9.600 l-3,-2.800 h-2.400 z" stroke-width="1.100" stroke-linejoin="round"/>
<path d="M1120,699.200 c1.200,1.400 1.200,3.400 0,4.800 M1122.200,697.400 c2.200,2.400 2.200,6 0,8.400 M1124.300,695.800 c3,3.200 3,8.400 0,11.600" stroke-width="1"/>
</g>
<!-- notifications -->
<path d="M1242,694.500 h13.500 v10.500 h-8.500 l-3,3 v-3 h-2 z" fill="#111"/>
<path d="M1244.500,697.600 h8.500 M1244.500,700 h8.500 M1244.500,702.400 h6" stroke="#d6d6d6" stroke-width="1"/>
<circle cx="1254.700" cy="708" r="5.900" fill="#d9d9d9" stroke="#111" stroke-width="1.100"/>
</svg>

<svg width="1280" height="720" viewBox="0 0 1280 720">
<defs><symbol id="sl" viewBox="388 161 862 486">
<path d="M525.45,423.3 A54.35,54.35 0 0 1 634.15,423.3 A54.35,54.35 0 0 0 742.85,423.3 A54.35,54.35 0 0 1 851.55,423.3 A54.35,54.35 0 0 0 960.25,423.3" fill="none" stroke="#3b3838" stroke-width="43.9"/>
<path d="M525.45,423.3 A54.35,55.5 0 0 1 634.15,423.3" fill="none" stroke="#fff" stroke-width="2.3" stroke-dasharray="7.6 6.34" stroke-dashoffset="7.97"/>
<path d="M634.15,423.3 A54.35,54.0 0 0 0 742.85,423.3" fill="none" stroke="#fff" stroke-width="2.3" stroke-dasharray="7.6 6.44" stroke-dashoffset="9.02"/>
<path d="M742.85,423.3 A54.35,54.6 0 0 1 851.55,423.3" fill="none" stroke="#fff" stroke-width="2.3" stroke-dasharray="7.6 6.73" stroke-dashoffset="13.67"/>
<path d="M851.55,423.3 A54.35,54.2 0 0 0 960.25,423.3" fill="none" stroke="#fff" stroke-width="2.3" stroke-dasharray="7.6 6.53" stroke-dashoffset="8.63"/>
<rect x="571.9" y="304" width="2.3" height="63" fill="#a6a6a6"/>
<rect x="668.9" y="403" width="2.3" height="63" fill="#a6a6a6"/>
<rect x="801.9" y="293" width="2.3" height="68.5" fill="#a6a6a6"/>
<rect x="890.9" y="384.5" width="2.3" height="87.5" fill="#a6a6a6"/>
<path d="M572.60,307.96 C573.47,308.18 576.07,308.95 577.81,309.26 C579.55,309.56 581.11,309.72 583.02,309.80 C584.93,309.88 587.54,309.85 589.27,309.73 C591.01,309.62 592.22,309.45 593.44,309.12 C594.66,308.79 595.61,308.27 596.57,307.76 C597.52,307.25 598.30,306.58 599.17,306.06 C600.04,305.54 600.82,305.05 601.78,304.63 C602.73,304.21 603.51,303.82 604.90,303.54 C606.29,303.27 608.03,303.05 610.11,303.00 C612.20,302.95 615.50,303.08 617.41,303.27 C619.32,303.46 620.36,303.79 621.57,304.16 C622.79,304.52 624.18,305.23 624.70,305.45 L624.70,331.15 C624.18,330.93 622.79,330.22 621.57,329.86 C620.36,329.49 619.32,329.16 617.41,328.97 C615.50,328.78 612.20,328.65 610.11,328.70 C608.03,328.75 606.29,328.97 604.90,329.24 C603.51,329.52 602.73,329.91 601.78,330.33 C600.82,330.75 600.04,331.24 599.17,331.76 C598.30,332.28 597.52,332.95 596.57,333.46 C595.61,333.97 594.66,334.49 593.44,334.82 C592.22,335.15 591.01,335.32 589.27,335.43 C587.54,335.55 584.93,335.58 583.02,335.50 C581.11,335.42 579.55,335.26 577.81,334.96 C576.07,334.65 573.47,333.88 572.60,333.66 Z" fill="#ff0000"/>
<path d="M670.20,405.98 C671.27,406.21 674.47,407.01 676.61,407.33 C678.75,407.65 680.67,407.82 683.02,407.90 C685.37,407.98 688.58,407.95 690.71,407.83 C692.85,407.71 694.34,407.53 695.84,407.19 C697.34,406.85 698.51,406.30 699.69,405.77 C700.86,405.24 701.82,404.54 702.89,404.00 C703.96,403.45 704.92,402.94 706.10,402.50 C707.27,402.07 708.23,401.65 709.94,401.37 C711.65,401.08 713.79,400.85 716.35,400.80 C718.92,400.75 722.98,400.88 725.33,401.08 C727.68,401.29 728.96,401.63 730.45,402.01 C731.95,402.39 733.66,403.13 734.30,403.36 L734.30,429.96 C733.66,429.73 731.95,428.99 730.45,428.61 C728.96,428.23 727.68,427.89 725.33,427.68 C722.98,427.48 718.92,427.35 716.35,427.40 C713.79,427.45 711.65,427.68 709.94,427.97 C708.23,428.25 707.27,428.67 706.10,429.10 C704.92,429.54 703.96,430.05 702.89,430.60 C701.82,431.14 700.86,431.84 699.69,432.37 C698.51,432.90 697.34,433.45 695.84,433.79 C694.34,434.13 692.85,434.31 690.71,434.43 C688.58,434.55 685.37,434.58 683.02,434.50 C680.67,434.42 678.75,434.25 676.61,433.93 C674.47,433.61 671.27,432.81 670.20,432.58 Z" fill="#ff0000"/>
<path d="M803.40,296.42 C804.56,296.70 808.05,297.70 810.38,298.10 C812.71,298.49 814.80,298.70 817.36,298.80 C819.92,298.90 823.41,298.86 825.74,298.71 C828.06,298.57 829.69,298.35 831.32,297.92 C832.95,297.49 834.23,296.82 835.51,296.16 C836.79,295.50 837.83,294.63 839.00,293.96 C840.16,293.29 841.21,292.65 842.49,292.11 C843.77,291.57 844.81,291.06 846.68,290.70 C848.54,290.35 850.86,290.06 853.66,290.00 C856.45,289.94 860.87,290.10 863.43,290.35 C865.99,290.60 867.38,291.03 869.01,291.50 C870.64,291.97 872.50,292.89 873.20,293.17 L873.20,329.97 C872.50,329.69 870.64,328.77 869.01,328.30 C867.38,327.83 865.99,327.40 863.43,327.15 C860.87,326.90 856.45,326.74 853.66,326.80 C850.86,326.86 848.54,327.15 846.68,327.50 C844.81,327.86 843.77,328.37 842.49,328.91 C841.21,329.45 840.16,330.09 839.00,330.76 C837.83,331.43 836.79,332.30 835.51,332.96 C834.23,333.62 832.95,334.29 831.32,334.72 C829.69,335.15 828.06,335.37 825.74,335.51 C823.41,335.66 819.92,335.70 817.36,335.60 C814.80,335.50 812.71,335.29 810.38,334.90 C808.05,334.50 804.56,333.50 803.40,333.22 Z" fill="#ff0000"/>
<path d="M891.60,388.49 C892.66,388.75 895.85,389.67 897.98,390.04 C900.11,390.41 902.02,390.60 904.36,390.70 C906.70,390.80 909.89,390.75 912.02,390.62 C914.14,390.48 915.63,390.28 917.12,389.88 C918.61,389.48 919.78,388.86 920.95,388.24 C922.12,387.62 923.07,386.82 924.14,386.19 C925.20,385.56 926.16,384.97 927.33,384.47 C928.50,383.96 929.45,383.48 931.16,383.16 C932.86,382.83 934.98,382.55 937.54,382.50 C940.09,382.45 944.13,382.60 946.47,382.83 C948.81,383.06 950.08,383.46 951.57,383.89 C953.06,384.33 954.76,385.19 955.40,385.45 L955.40,422.05 C954.76,421.79 953.06,420.93 951.57,420.49 C950.08,420.06 948.81,419.66 946.47,419.43 C944.13,419.20 940.09,419.05 937.54,419.10 C934.98,419.15 932.86,419.43 931.16,419.76 C929.45,420.08 928.50,420.56 927.33,421.07 C926.16,421.57 925.20,422.16 924.14,422.79 C923.07,423.42 922.12,424.23 920.95,424.84 C919.78,425.46 918.61,426.08 917.12,426.48 C915.63,426.88 914.14,427.08 912.02,427.22 C909.89,427.35 906.70,427.40 904.36,427.30 C902.02,427.20 900.11,427.01 897.98,426.64 C895.85,426.27 892.66,425.35 891.60,425.09 Z" fill="#ff0000"/>
<path d="M0,0 L-14,-14.5 L-4,-14.5 C-4,-27 3,-36.4 13,-36.4 C23.5,-36.4 29.3,-30 29.3,-19 C29.3,-8 28.2,3 27.3,14 C26.8,0 26.3,-11 24.5,-18 C22.6,-24.6 19.5,-26.7 15.3,-26.7 C10.2,-26.7 6,-21.5 6,-14.5 L15.5,-14.5 Z" transform="translate(594,275.3)" fill="#fff" stroke="#000" stroke-width="1.45" stroke-linejoin="miter"/>
<path d="M0,0 L-14,-14.5 L-4,-14.5 C-4,-27 3,-36.4 13,-36.4 C23.5,-36.4 29.3,-30 29.3,-19 C29.3,-8 28.2,3 27.3,14 C26.8,0 26.3,-11 24.5,-18 C22.6,-24.6 19.5,-26.7 15.3,-26.7 C10.2,-26.7 6,-21.5 6,-14.5 L15.5,-14.5 Z" transform="translate(693.9,376.7)" fill="#fff" stroke="#000" stroke-width="1.45" stroke-linejoin="miter"/>
<path d="M0,0 L-14,-14.5 L-4,-14.5 C-4,-27 3,-36.4 13,-36.4 C23.5,-36.4 29.3,-30 29.3,-19 C29.3,-8 28.2,3 27.3,14 C26.8,0 26.3,-11 24.5,-18 C22.6,-24.6 19.5,-26.7 15.3,-26.7 C10.2,-26.7 6,-21.5 6,-14.5 L15.5,-14.5 Z" transform="translate(819.5,274.7)" fill="#fff" stroke="#000" stroke-width="1.45" stroke-linejoin="miter"/>
<path d="M0,0 L-14,-14.5 L-4,-14.5 C-4,-27 3,-36.4 13,-36.4 C23.5,-36.4 29.3,-30 29.3,-19 C29.3,-8 28.2,3 27.3,14 C26.8,0 26.3,-11 24.5,-18 C22.6,-24.6 19.5,-26.7 15.3,-26.7 C10.2,-26.7 6,-21.5 6,-14.5 L15.5,-14.5 Z" transform="translate(915.3,355.8)" fill="#fff" stroke="#000" stroke-width="1.45" stroke-linejoin="miter"/>
<text x="580.6" y="324.3" font-size="13.3" fill="#fff" stroke="#fff" stroke-width="0.4" font-family="Liberation Sans, sans-serif">Startup</text>
<text x="673.8" y="423.8" font-size="13.3" fill="#fff" stroke="#fff" stroke-width="0.4" font-family="Liberation Sans, sans-serif">Bootstrap</text>
<text x="809.3" y="313.5" font-size="13.3" fill="#fff" stroke="#fff" stroke-width="0.4" font-family="Liberation Sans, sans-serif">Expansion</text>
<text x="892.9" y="405.3" font-size="13.3" fill="#fff" stroke="#fff" stroke-width="0.4" font-family="Liberation Sans, sans-serif">Innovation</text>
<text x="572.3" y="297.0" font-size="14" fill="#111" font-family="Liberation Sans, sans-serif">2003</text>
<text x="675.8" y="396.2" font-size="14" fill="#111" font-family="Liberation Sans, sans-serif">2007</text>
<text x="800.6" y="291.4" font-size="14" fill="#111" font-family="Liberation Sans, sans-serif">2015</text>
<text x="898.3" y="374.4" font-size="13.1" fill="#111" font-family="Liberation Sans, sans-serif">Today</text>
</symbol></defs>
<use href="#sl" x="388" y="161" width="862" height="486"/>
<use href="#sl" x="34.5" y="170" width="313.8" height="177"/>
</svg>
<span class="t" style="left:1252.20px;top:703.16px;font-size:9.5px;color:#111;">2</span>
</body></html>
